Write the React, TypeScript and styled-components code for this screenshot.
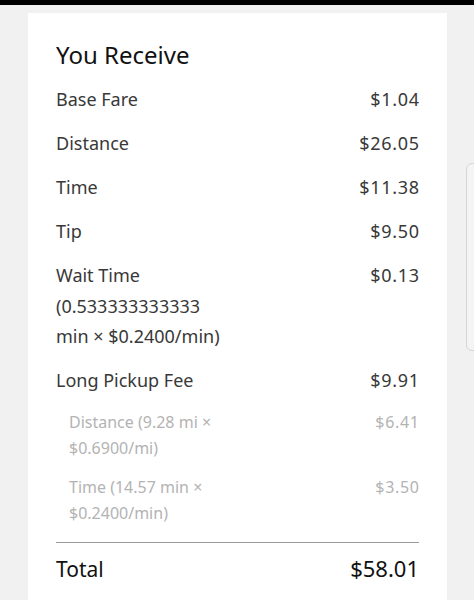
import React from "react";
import styled, { createGlobalStyle } from "styled-components";

const Global = createGlobalStyle`
  html, body { margin: 0; padding: 0; background: #f1f1f1; }
  body { font-family: "Noto Sans", "Open Sans", sans-serif; -webkit-font-smoothing: antialiased; }
`;

const Page = styled.div`
  width: 474px;
  height: 600px;
  overflow: hidden;
  position: relative;
  background: #f1f1f1;
  display: flex;
  flex-direction: column;
`;

const StatusBar = styled.div`
  height: 5px;
  background: #000;
  flex: none;
`;

const Card = styled.div`
  margin: 8px 27px 0 28px;
  background: #fff;
  padding: 26px 28px 0 28px;
  flex: 1;
  display: flex;
  flex-direction: column;
`;

const Title = styled.h1`
  margin: 0 0 13px 0;
  font-size: 24px;
  font-weight: 400;
  color: #111;
  line-height: 32px;
`;

const Row = styled.div<{ $sub?: boolean }>`
  display: flex;
  justify-content: space-between;
  align-items: flex-start;
  padding: ${(p) => (p.$sub ? "0 0 12.5px 13px" : "0 0 13.5px 0")};
  color: ${(p) => (p.$sub ? "#b3b3b3" : "#383838")};
  font-size: ${(p) => (p.$sub ? "16px" : "18px")};
  line-height: ${(p) => (p.$sub ? "26px" : "30.5px")};
`;

const Label = styled.span<{ $w?: number }>`
  max-width: ${(p) => (p.$w ? `${p.$w}px` : "none")};
`;

const Amount = styled.span`
  white-space: nowrap;
  letter-spacing: 0.7px;
  margin-right: -0.7px;
`;

const Divider = styled.hr`
  border: 0;
  border-top: 1px solid #9a9a9a;
  margin: 4px 0 0 0;
`;

const TotalRow = styled.div`
  display: flex;
  justify-content: space-between;
  align-items: baseline;
  line-height: 50px;
  color: #111;
`;

const TotalLabel = styled.span`
  font-size: 21px;
`;

const TotalAmount = styled.span`
  font-size: 22px;
`;

const EdgeHandle = styled.div`
  position: absolute;
  right: -6px;
  top: 163px;
  width: 12px;
  height: 186px;
  border: 1px solid #d6d6d6;
  border-radius: 6px;
  background: #f4f4f4;
`;

const rows: { label: string; amount: string; w?: number }[] = [
  { label: "Base Fare", amount: "$1.04" },
  { label: "Distance", amount: "$26.05" },
  { label: "Time", amount: "$11.38" },
  { label: "Tip", amount: "$9.50" },
  { label: "Wait Time (0.533333333333 min × $0.2400/min)", amount: "$0.13", w: 172 },
  { label: "Long Pickup Fee", amount: "$9.91" },
];

const subs = [
  { label: "Distance (9.28 mi × $0.6900/mi)", amount: "$6.41" },
  { label: "Time (14.57 min × $0.2400/min)", amount: "$3.50" },
];

export default function App() {
  return (
    <>
      <Global />
      <Page>
        <StatusBar />
        <Card>
          <Title>You Receive</Title>
          {rows.map((r) => (
            <Row key={r.label}>
              <Label $w={r.w}>{r.label}</Label>
              <Amount>{r.amount}</Amount>
            </Row>
          ))}
          {subs.map((r) => (
            <Row $sub key={r.label}>
              <Label $w={160}>{r.label}</Label>
              <Amount>{r.amount}</Amount>
            </Row>
          ))}
          <Divider />
          <TotalRow>
            <TotalLabel>Total</TotalLabel>
            <TotalAmount>$58.01</TotalAmount>
          </TotalRow>
        </Card>
        <EdgeHandle />
      </Page>
    </>
  );
}
